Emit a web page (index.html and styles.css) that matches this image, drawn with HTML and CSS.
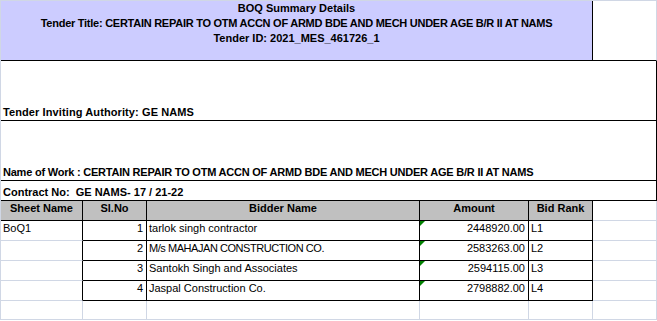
FILE: index.html
```html
<!DOCTYPE html>
<html>
<head>
<meta charset="utf-8">
<link rel="stylesheet" href="styles.css">
<title>BOQ Summary Details</title>
</head>
<body>
<div class="sheet">
  <div class="c title span5 bk-r bk-b">
    <div>BOQ Summary Details</div>
    <div class="tight">Tender Title: CERTAIN REPAIR TO OTM ACCN OF ARMD BDE AND MECH UNDER AGE B/R II AT NAMS</div>
    <div>Tender ID: 2021_MES_461726_1</div>
  </div>
  <div class="c bk-b"></div>

  <div class="c info span6 bk-r bk-b"><span class="loose">Tender Inviting Authority: GE NAMS</span></div>
  <div class="c info span6 bk-r bk-b"><span class="tight2">Name of Work : CERTAIN REPAIR TO OTM ACCN OF ARMD BDE AND MECH UNDER AGE B/R II AT NAMS</span></div>
  <div class="c info span6 bk-r bk-b">Contract No:&nbsp; GE NAMS- 17 / 21-22</div>

  <div class="c hd bk-r bk-b">Sheet Name</div>
  <div class="c hd bk-r bk-b">Sl.No</div>
  <div class="c hd bk-r bk-b">Bidder Name</div>
  <div class="c hd bk-r bk-b">Amount</div>
  <div class="c hd bk-r bk-b">Bid Rank</div>
  <div class="c"></div>

  <div class="c d bk-r">BoQ1</div>
  <div class="c d num bk-r bk-b">1</div>
  <div class="c d bk-r bk-b">tarlok singh contractor</div>
  <div class="c d num amt bk-r bk-b">2448920.00</div>
  <div class="c d bk-r bk-b">L1</div>
  <div class="c"></div>

  <div class="c d bk-r"></div>
  <div class="c d num bk-r bk-b">2</div>
  <div class="c d bk-r bk-b"><span class="caps">M/s MAHAJAN CONSTRUCTION CO.</span></div>
  <div class="c d num amt bk-r bk-b">2583263.00</div>
  <div class="c d bk-r bk-b">L2</div>
  <div class="c"></div>

  <div class="c d bk-r"></div>
  <div class="c d num bk-r bk-b">3</div>
  <div class="c d bk-r bk-b">Santokh Singh and Associates</div>
  <div class="c d num amt bk-r bk-b">2594115.00</div>
  <div class="c d bk-r bk-b">L3</div>
  <div class="c"></div>

  <div class="c d bk-r"></div>
  <div class="c d num bk-r bk-b">4</div>
  <div class="c d bk-r bk-b">Jaspal Construction Co.</div>
  <div class="c d num amt bk-r bk-b">2798882.00</div>
  <div class="c d bk-r bk-b">L4</div>
  <div class="c"></div>

  <div class="c"></div>
  <div class="c"></div>
  <div class="c"></div>
  <div class="c"></div>
  <div class="c"></div>
  <div class="c"></div>
</div>
</body>
</html>
```
FILE: styles.css
```css
html, body {
  margin: 0;
  padding: 0;
  background: #ffffff;
}

body {
  font-family: "Liberation Sans", Arial, sans-serif;
  font-size: 11px;
  color: #000000;
}

.sheet {
  display: grid;
  grid-template-columns: 82px 64px 273px 109px 64px 64px;
  grid-template-rows: 60px 60px 60px 20px 20px 20px 20px 20px 20px 19px;
  width: 657px;
  box-sizing: border-box;
  border-top: 1px solid #d0d7e5;
  border-left: 1px solid #d0d7e5;
}

.c {
  box-sizing: border-box;
  border-right: 1px solid #d0d7e5;
  border-bottom: 1px solid #d0d7e5;
  line-height: 13px;
  white-space: nowrap;
  overflow: visible;
  position: relative;
}

.bk-r { border-right-color: #000000; }
.bk-b { border-bottom-color: #000000; }

.span5 { grid-column: span 5; }
.span6 { grid-column: span 6; }

.title {
  background: #ccccff;
  font-weight: bold;
  text-align: center;
  line-height: 15px;
  padding-top: 0;
}

.info {
  display: flex;
  align-items: flex-end;
  font-weight: bold;
  padding: 0 2px 1px 2px;
}

.hd {
  background: #c0c0c0;
  font-weight: bold;
  text-align: center;
  padding-top: 1px;
}

.d {
  padding: 1px 2px 0 2px;
}

.num {
  text-align: right;
  padding-right: 3px;
}

.tight { letter-spacing: -0.26px; }
.tight2 { letter-spacing: -0.22px; }
.loose { letter-spacing: 0.1px; }
.caps { letter-spacing: -0.45px; }

.amt::before {
  content: "";
  position: absolute;
  left: 0;
  top: 0;
  width: 0;
  height: 0;
  border-top: 5px solid #008000;
  border-right: 5px solid transparent;
}
```
